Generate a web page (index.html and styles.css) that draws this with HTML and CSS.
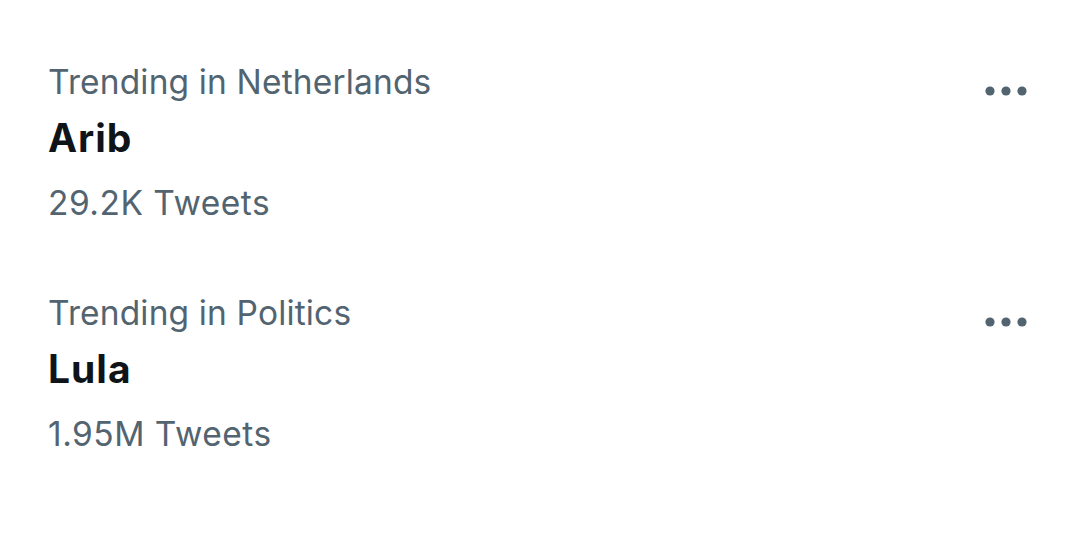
FILE: index.html
```html
<!DOCTYPE html>
<html>
<head>
<meta charset="utf-8">
<link rel="stylesheet" href="styles.css">
</head>
<body>
<div class="list">
  <div class="trend">
    <div class="info">
      <div class="meta">Trending in Netherlands</div>
      <div class="name">Arib</div>
      <div class="count">29.2K Tweets</div>
    </div>
    <div class="more">
      <svg width="42" height="12" viewBox="0 0 42 12"><circle cx="5" cy="6" r="4.6" fill="#536471"/><circle cx="21" cy="6" r="4.6" fill="#536471"/><circle cx="37" cy="6" r="4.6" fill="#536471"/></svg>
    </div>
  </div>
  <div class="trend">
    <div class="info">
      <div class="meta">Trending in Politics</div>
      <div class="name">Lula</div>
      <div class="count">1.95M Tweets</div>
    </div>
    <div class="more">
      <svg width="42" height="12" viewBox="0 0 42 12"><circle cx="5" cy="6" r="4.6" fill="#536471"/><circle cx="21" cy="6" r="4.6" fill="#536471"/><circle cx="37" cy="6" r="4.6" fill="#536471"/></svg>
    </div>
  </div>
</div>
</body>
</html>
```
FILE: styles.css
```css
html, body {
  margin: 0;
  padding: 0;
  background: #ffffff;
}
body {
  font-family: Inter, "Noto Sans", sans-serif;
  width: 1080px;
  height: 540px;
  overflow: hidden;
}
.list {
  padding-top: 29px;
}
.trend {
  display: flex;
  justify-content: space-between;
  align-items: flex-start;
  padding: 34px 53px 38px 48px;
}
.meta, .count {
  color: #536471;
  font-size: 33.5px;
  letter-spacing: 0.15px;
  line-height: 38px;
  height: 38px;
}
.count {
  letter-spacing: 0.5px;
  margin-top: 22px;
}
.name {
  color: #0f1419;
  font-size: 39px;
  font-weight: 700;
  letter-spacing: 1px;
  line-height: 48px;
  height: 48px;
  margin-top: 13px;
}
.more {
  margin-top: 22px;
  display: flex;
}
```
